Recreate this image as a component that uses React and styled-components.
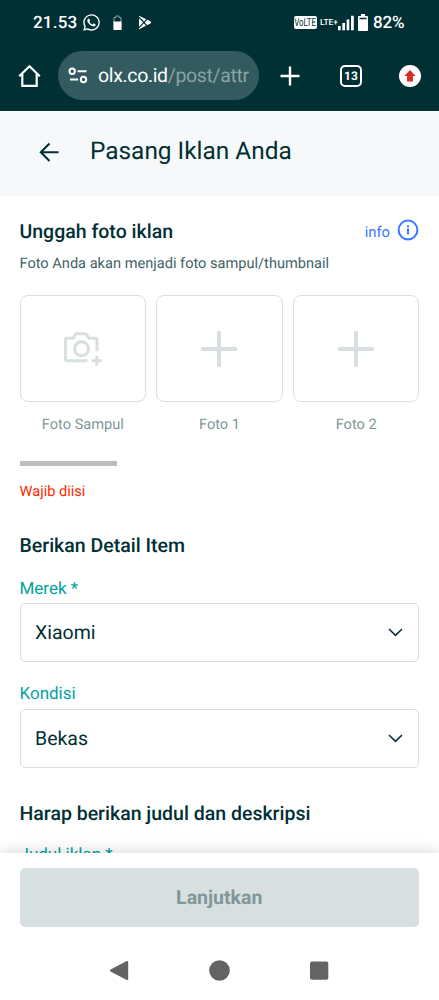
import React, {useState} from 'react';
import styled, { createGlobalStyle } from 'styled-components';
import { FaWhatsapp } from 'react-icons/fa';

const GlobalStyle = createGlobalStyle`
    * {
        box-sizing: border-box;
    }
    body {
        margin: 0;
        background: #fff;
        font-family: Roboto, "Liberation Sans", sans-serif;
        color: #002f34;
        text-rendering: geometricPrecision;
    }
`

const Screen = styled.div`
    display: flex;
    flex-direction: column;
    width: 439px;
    height: 1000px;
    overflow: hidden;
    background: #fff;
`

const StatusBar = styled.div`
    flex: none;
    display: flex;
    align-items: center;
    height: 46px;
    padding: 0 34px 1px 33px;
    background: #002f34;
    color: #fff;
`
const StatusText = styled.span`
    width: ${props => props.$width};
    font-size: 17px;
    font-weight: 500;
    line-height: 20px;
    letter-spacing: ${props => props.$spacing || '0'};
    white-space: nowrap;
`
const StatusIcon = styled.span`
    display: flex;
    margin-left: ${props => props.$left || '0'};
`
const Spacer = styled.div`
    flex: 1;
`
const Volte = styled.span`
    display: flex;
    align-items: center;
    justify-content: center;
    width: 23px;
    height: 13px;
    border-radius: 2px;
    background: #fff;
    color: #002f34;
    font-size: 11px;
    line-height: 13px;
    span {
        transform: scaleX(0.72);
    }
`
const Lte = styled.span`
    width: 18px;
    margin-left: 3px;
    font-size: 8.5px;
    font-weight: 500;
    letter-spacing: -0.1px;
    white-space: nowrap;
`

const BrowserBar = styled.div`
    flex: none;
    display: flex;
    align-items: center;
    height: 65px;
    padding: 0 18px 6px;
    background: #002f34;
    color: #fff;
`
const AddressPill = styled.div`
    display: flex;
    align-items: center;
    width: 201px;
    height: 49px;
    margin-left: 17px;
    padding: 0 9px 0 10px;
    border-radius: 25px;
    background: #335a5e;
`
const Url = styled.div`
    width: 152px;
    margin-left: 10px;
    overflow: hidden;
    font-size: 19.5px;
    line-height: 26px;
    letter-spacing: -0.35px;
    white-space: nowrap;
`
const UrlPath = styled.span`
    color: #8aa3a5;
`
const BarIcon = styled.span`
    display: flex;
    margin-left: ${props => props.$left || '0'};
`
const TabCount = styled.span`
    display: flex;
    align-items: center;
    justify-content: center;
    width: 22px;
    height: 22px;
    margin-left: 40px;
    border: 2px solid #fff;
    border-radius: 5px;
    font-size: 12px;
    font-weight: 700;
`

const PageHeader = styled.header`
    flex: none;
    display: flex;
    align-items: center;
    height: 85px;
    padding: 0 38px 6px;
    background: #f7f8f9;
`
const PageTitle = styled.h1`
    margin: 0 0 0 30px;
    font-size: 24.4px;
    font-weight: 400;
    line-height: 32px;
`

const Content = styled.main`
    flex: none;
    height: 657px;
    padding: 24px 20px 0 19.5px;
    overflow: hidden;
`
const TitleRow = styled.div`
    display: flex;
    align-items: center;
    justify-content: space-between;
    height: 24px;
`
const SectionTitle = styled.h2`
    margin: ${props => props.$top || '0'} 0 0;
    font-size: 19.5px;
    font-weight: 500;
    line-height: 24px;
`
const InfoLink = styled.a`
    display: flex;
    align-items: center;
    gap: 7px;
    color: #3a77ff;
    font-size: 14.8px;
    svg {
        margin-top: -5px;
    }
`
const Hint = styled.p`
    margin: 9px 0 0;
    color: #406367;
    font-size: 14.6px;
    line-height: 20px;
`
const PhotoGrid = styled.div`
    display: grid;
    grid-template-columns: repeat(3, 1fr);
    gap: 10px;
    margin: 22px -0.5px 0 0;
`
const PhotoTile = styled.div`
    display: flex;
    align-items: center;
    justify-content: center;
    height: 107px;
    border: 1px solid #d8dfe0;
    border-radius: 8px;
`
const PhotoCaption = styled.div`
    margin-top: 12px;
    color: #7f9799;
    font-size: 14.6px;
    line-height: 20px;
    text-align: center;
`
const ScrollThumb = styled.div`
    width: 97px;
    height: 5px;
    margin-top: 27px;
    background: #bdbdbd;
`
const Warning = styled.div`
    margin-top: 15px;
    color: #ff2800;
    font-size: 14.6px;
    line-height: 20px;
`
const FieldLabel = styled.label`
    display: block;
    margin-top: ${props => props.$top};
    color: #00a49f;
    font-size: 17px;
    line-height: 22px;
`
const SelectBox = styled.button`
    display: flex;
    align-items: center;
    justify-content: space-between;
    width: 100%;
    height: 59px;
    margin-top: ${props => props.$top || '4px'};
    padding: 0 15px 0 14.5px;
    border: 1px solid #d8dfe0;
    border-radius: 5px;
    background: #fff;
    color: #002f34;
    font-family: inherit;
    font-size: 19.5px;
    text-rendering: inherit;
`

const Footer = styled.footer`
    position: relative;
    flex: none;
    height: 88px;
    padding: 15px 20px 0 19.5px;
    background: #fff;
    box-shadow: 0 -2px 14px rgba(0, 0, 0, 0.14);
`
const NextButton = styled.button`
    width: 100%;
    height: 59px;
    padding: 0;
    border: 0;
    border-radius: 5px;
    background: #d8dfe0;
    color: #7f9799;
    font-family: inherit;
    font-size: 19.5px;
    font-weight: 700;
    text-rendering: inherit;
`
const AndroidNav = styled.nav`
    position: relative;
    flex: none;
    display: flex;
    justify-content: center;
    gap: 79px;
    height: 59px;
    padding: 19px 1px 0 0;
    background: #fff;
`

const HomeIcon = () => (
    <svg width="23" height="24" viewBox="0 0 23 24" fill="none" stroke="#fff" strokeWidth="2.2">
        <path d="M1.2 12.3 11.5 2.2 21.8 12.3M4.3 10V21.8H18.7V10"/>
    </svg>
)

const TuneIcon = () => (
    <svg width="20" height="17" viewBox="0 0 20 17" fill="none" stroke="#fff" strokeWidth="2">
        <circle cx="4.2" cy="4.2" r="2.7"/>
        <path d="M9.5 4.2H18.5M2 12.5H10"/>
        <circle cx="15.5" cy="12.5" r="2.7"/>
    </svg>
)

const PlayIcon = () => (
    <svg width="14" height="15" viewBox="0 0 14 15">
        <path d="M1 .8 12.5 6.2Q13.8 7.3 12.5 8.5L1 14.2Z" fill="#fff"/>
        <path d="M1 2.3 9.8 11.6M1 12.6 9.8 3.4" stroke="#002f34" strokeWidth="1.3"/>
    </svg>
)

const CameraIcon = () => (
    <svg width="40" height="38" viewBox="1 .7 40 38" fill="none" stroke="#d8dfe0" strokeWidth="3">
        <path d="M25.5 31.5H5Q3.5 31.5 3.5 30V10.5Q3.5 9 5 9H11L14 4.5H24L27 9H33.5Q35 9 35 10.5V22"/>
        <circle cx="19.5" cy="19.5" r="7"/>
        <path d="M34.8 26.5V36.5M29.8 31.5H39.8"/>
    </svg>
)

const AddIcon = () => (
    <svg width="38" height="38" viewBox="0 0 38 38" stroke="#d8dfe0" strokeWidth="4" strokeLinecap="round">
        <path d="M19 2.8V35.2M2.8 19H35.2"/>
    </svg>
)

const ChevronIcon = () => (
    <svg width="15" height="9" viewBox="0 0 15 9" fill="none" stroke="#002f34" strokeWidth="1.5">
        <path d="M1 1 7.5 7.4 14 1"/>
    </svg>
)

const photos = ['Foto Sampul', 'Foto 1', 'Foto 2'];

const Select = ({value, top}) => (
    <SelectBox type="button" $top={top}>
        {value}
        <ChevronIcon/>
    </SelectBox>
)

const App = () => {
    const [brand] = useState('Xiaomi');
    const [condition] = useState('Bekas');

    return (
        <Screen>
            <GlobalStyle/>
            <StatusBar>
                <StatusText $width="49px" $spacing="0.2px">21.53</StatusText>
                <StatusIcon><FaWhatsapp size={19}/></StatusIcon>
                <StatusIcon $left="12px">
                    <svg width="9" height="16" viewBox="0 0 9 16">
                        <path d="M3 1H6V2.5H8V14.5H1V2.5H3Z" fill="none" stroke="#8ea5a7"/>
                        <path d="M.5 6.5H8.5V15H.5Z" fill="#fff"/>
                    </svg>
                </StatusIcon>
                <StatusIcon $left="16px"><PlayIcon/></StatusIcon>
                <Spacer/>
                <Volte><span>VoLTE</span></Volte>
                <Lte>LTE+</Lte>
                <StatusIcon>
                    <svg width="17" height="16" viewBox="0 0 17 16" fill="#fff">
                        <path d="M0 11H2.7V15.2H0ZM4.3 8H7V15.2H4.3ZM8.6 4.5H11.3V15.2H8.6ZM13 .8H15.8V15.2H13Z"/>
                    </svg>
                </StatusIcon>
                <StatusIcon $left="3px">
                    <svg width="10" height="17" viewBox="0 0 10 17">
                        <path d="M3 0H7V2H9Q10 2 10 3V16Q10 17 9 17H1Q0 17 0 16V3Q0 2 1 2H3Z" fill="#fff"/>
                        <path d="M1.5 4.5H8.5" stroke="#002f34" strokeWidth="1.5"/>
                    </svg>
                </StatusIcon>
                <StatusIcon $left="5px"><StatusText $width="32px" $spacing="-0.1px">82%</StatusText></StatusIcon>
            </StatusBar>
            <BrowserBar>
                <HomeIcon/>
                <AddressPill>
                    <TuneIcon/>
                    <Url>olx.co.id<UrlPath>/post/attr</UrlPath></Url>
                </AddressPill>
                <BarIcon $left="21px">
                    <svg width="20" height="20" viewBox="0 0 20 20" stroke="#fff" strokeWidth="2.4">
                        <path d="M10 .5V19.5M.5 10H19.5"/>
                    </svg>
                </BarIcon>
                <TabCount>13</TabCount>
                <BarIcon $left="37px">
                    <svg width="22" height="22" viewBox="0 0 22 22">
                        <circle cx="11" cy="11" r="11" fill="#fff"/>
                        <path d="M11 5 16.7 11H14V16.5H8V11H5.3Z" fill="#d93025"/>
                    </svg>
                </BarIcon>
            </BrowserBar>

            <PageHeader>
                <svg width="22" height="22" viewBox="0 0 22 22" fill="none" stroke="#002f34" strokeWidth="2.1">
                    <path d="M20.5 12.3H3M11.5 3.5 2.8 12.3 11.5 21"/>
                </svg>
                <PageTitle>Pasang Iklan Anda</PageTitle>
            </PageHeader>

            <Content>
                <TitleRow>
                    <SectionTitle>Unggah foto iklan</SectionTitle>
                    <InfoLink>
                        info
                        <svg width="22" height="22" viewBox="0 0 22 22" fill="none" stroke="#3a77ff" strokeWidth="2">
                            <circle cx="11" cy="11" r="9.4"/>
                            <path d="M11 9.5V15.2M11 6.3V8.2"/>
                        </svg>
                    </InfoLink>
                </TitleRow>
                <Hint>Foto Anda akan menjadi foto sampul/thumbnail</Hint>
                <PhotoGrid>
                    {photos.map((name, i) => (
                        <div key={name}>
                            <PhotoTile>{i === 0 ? <CameraIcon/> : <AddIcon/>}</PhotoTile>
                            <PhotoCaption>{name}</PhotoCaption>
                        </div>
                    ))}
                </PhotoGrid>
                <ScrollThumb/>
                <Warning>Wajib diisi</Warning>

                <SectionTitle $top="33px">Berikan Detail Item</SectionTitle>
                <FieldLabel $top="20px">Merek *</FieldLabel>
                <Select value={brand} top="3px"/>
                <FieldLabel $top="21px">Kondisi</FieldLabel>
                <Select value={condition}/>

                <SectionTitle $top="34px">Harap berikan judul dan deskripsi</SectionTitle>
                <FieldLabel $top="18px">Judul iklan *</FieldLabel>
            </Content>

            <Footer>
                <NextButton>Lanjutkan</NextButton>
            </Footer>
            <AndroidNav>
                <svg width="21" height="21" viewBox="0 0 21 21">
                    <path d="M18.2 2V19L2 10.5Z" fill="#636363" stroke="#636363" strokeWidth="2" strokeLinejoin="round"/>
                </svg>
                <svg width="21" height="21" viewBox="0 0 21 21">
                    <circle cx="10.5" cy="10.5" r="10.3" fill="#636363"/>
                </svg>
                <svg width="21" height="21" viewBox="0 0 21 21">
                    <rect x="1" y="1.4" width="18.3" height="18.3" rx="2" fill="#636363"/>
                </svg>
            </AndroidNav>
        </Screen>
    );
};

export default App;
